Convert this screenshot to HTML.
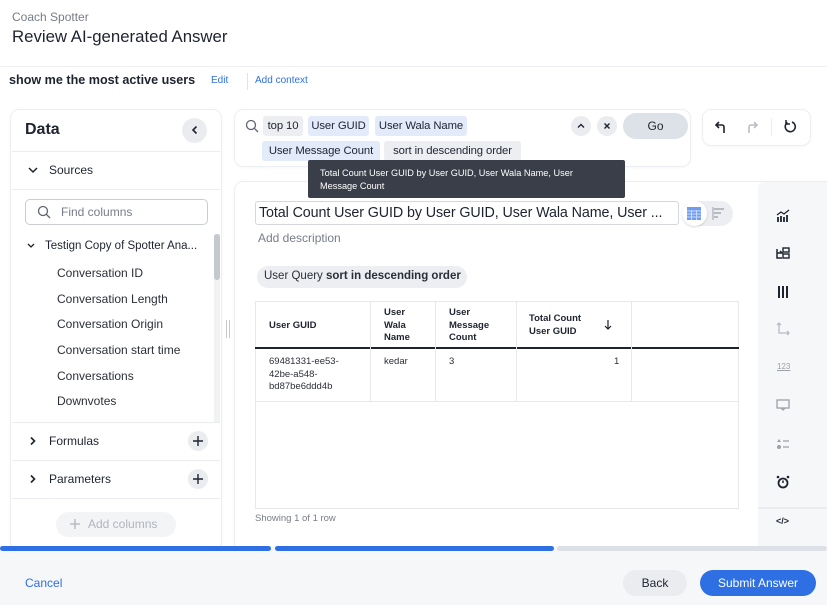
<!DOCTYPE html>
<html><head><style>
*{box-sizing:border-box;margin:0;padding:0}
body{width:827px;height:605px;overflow:hidden;background:#fff;font-family:"Liberation Sans",sans-serif;color:#1d232f;position:relative}
.a{position:absolute}
.t{position:absolute;white-space:nowrap}
.panel{position:absolute;background:#fff;border-radius:8px;box-shadow:0 0 0 1px #eceef2,0 1px 3px rgba(0,0,0,.06)}
.hr{position:absolute;height:1px;background:#eaecf0}
.chip{position:absolute;height:20px;line-height:20px;font-size:11.3px;border-radius:3px;text-align:center;white-space:nowrap;overflow:hidden;letter-spacing:-0.1px}
.blue{background:#e3ebfb}.gray{background:#eceef2}
.circ{position:absolute;border-radius:50%;background:#eaecf0}
.item{position:absolute;left:57px;font-size:12px;color:#2b2f38}
.icon{position:absolute;left:775px}
</style></head><body>
<div class="t" style="left:12px;top:10px;font-size:12px;color:#777d88">Coach Spotter</div>
<div class="t" style="left:12px;top:27px;font-size:16.8px;color:#1d232f">Review AI-generated Answer</div>
<div class="hr" style="left:0;top:66px;width:827px;background:#eef0f3"></div>
<div class="t" style="left:9px;top:73px;font-size:12.6px;font-weight:bold">show me the most active users</div>
<div class="t" style="left:211px;top:75px;font-size:10px;color:#2f6fe4">Edit</div>
<div class="a" style="left:247px;top:73px;width:1px;height:17px;background:#e1e3e8"></div>
<div class="t" style="left:255px;top:75px;font-size:10px;color:#2f6fe4">Add context</div>

<!-- left panel -->
<div class="panel" style="left:11px;top:110px;width:210px;height:440px"></div>
<div class="t" style="left:25px;top:121px;font-size:16px;font-weight:bold">Data</div>
<div class="circ" style="left:182px;top:118px;width:25px;height:25px"></div>
<svg class="a" style="left:189px;top:124px" width="12" height="12"><path d="M7.5 2.5 4 6l3.5 3.5" stroke="#1d232f" stroke-width="1.6" fill="none"/></svg>
<div class="hr" style="left:12px;top:151px;width:208px"></div>
<svg class="a" style="left:27px;top:165px" width="12" height="10"><path d="M2 3l4 4 4-4" stroke="#1d232f" stroke-width="1.5" fill="none"/></svg>
<div class="t" style="left:49px;top:163px;font-size:12px">Sources</div>
<div class="hr" style="left:12px;top:189px;width:208px"></div>
<div class="a" style="left:25px;top:199px;width:183px;height:26px;border:1px solid #c9ccd3;border-radius:5px"></div>
<svg class="a" style="left:37px;top:205px" width="14" height="14"><circle cx="6" cy="6" r="4.5" stroke="#5f6570" stroke-width="1.3" fill="none"/><path d="M9.3 9.3 13 13" stroke="#5f6570" stroke-width="1.3"/></svg>
<div class="t" style="left:61px;top:205px;font-size:12px;color:#777d88">Find columns</div>
<svg class="a" style="left:26px;top:242px" width="10" height="8"><path d="M2 2l3 3 3-3" stroke="#1d232f" stroke-width="1.3" fill="none"/></svg>
<div class="t" style="left:45px;top:240px;font-size:11.5px">Testign Copy of Spotter Ana...</div>
<div class="a" style="left:214px;top:234px;width:6px;height:188px;background:#f1f2f4"></div>
<div class="a" style="left:214px;top:234px;width:6px;height:46px;background:#c5c8ce;border-radius:3px"></div>
<div class="item" style="top:266px">Conversation ID</div>
<div class="item" style="top:292px">Conversation Length</div>
<div class="item" style="top:317px">Conversation Origin</div>
<div class="item" style="top:343px">Conversation start time</div>
<div class="item" style="top:369px">Conversations</div>
<div class="item" style="top:394px">Downvotes</div>
<div class="hr" style="left:12px;top:422px;width:208px"></div>
<svg class="a" style="left:28px;top:436px" width="10" height="10"><path d="M3 1.5l3.5 3.5L3 8.5" stroke="#1d232f" stroke-width="1.6" fill="none"/></svg>
<div class="t" style="left:49px;top:434px;font-size:12px">Formulas</div>
<div class="circ" style="left:188px;top:431px;width:20px;height:20px"></div>
<svg class="a" style="left:192px;top:435px" width="12" height="12"><path d="M6 1v10M1 6h10" stroke="#1d232f" stroke-width="1.4"/></svg>
<div class="hr" style="left:12px;top:460px;width:208px"></div>
<svg class="a" style="left:28px;top:474px" width="10" height="10"><path d="M3 1.5l3.5 3.5L3 8.5" stroke="#1d232f" stroke-width="1.6" fill="none"/></svg>
<div class="t" style="left:49px;top:472px;font-size:12px">Parameters</div>
<div class="circ" style="left:188px;top:469px;width:20px;height:20px"></div>
<svg class="a" style="left:192px;top:473px" width="12" height="12"><path d="M6 1v10M1 6h10" stroke="#1d232f" stroke-width="1.4"/></svg>
<div class="hr" style="left:12px;top:498px;width:208px"></div>
<div class="a" style="left:56px;top:512px;width:120px;height:25px;border-radius:13px;background:#f3f4f6"></div>
<svg class="a" style="left:69px;top:518px" width="12" height="12"><path d="M6 1v10M1 6h10" stroke="#b0b4bc" stroke-width="1.3"/></svg>
<div class="t" style="left:88px;top:517px;font-size:12px;color:#b0b4bc">Add columns</div>
<div class="a" style="left:226px;top:320px;width:1px;height:18px;background:#c5c8ce"></div>
<div class="a" style="left:229px;top:320px;width:1px;height:18px;background:#c5c8ce"></div>

<!-- search -->
<div class="panel" style="left:235px;top:110px;width:455px;height:56px"></div>
<svg class="a" style="left:245px;top:119px" width="14" height="14"><circle cx="6" cy="6" r="4.5" stroke="#5f6570" stroke-width="1.3" fill="none"/><path d="M9.3 9.3 13 13" stroke="#5f6570" stroke-width="1.3"/></svg>
<div class="chip gray" style="left:263px;top:116px;width:40px">top 10</div>
<div class="chip blue" style="left:308px;top:116px;width:61px">User GUID</div>
<div class="chip blue" style="left:375px;top:116px;width:92px">User Wala Name</div>
<div class="chip blue" style="left:262px;top:141px;width:118px">User Message Count</div>
<div class="chip gray" style="left:384px;top:141px;width:137px">sort in descending order</div>
<div class="circ" style="left:571px;top:116px;width:20px;height:20px"></div>
<svg class="a" style="left:576px;top:121px" width="10" height="10"><path d="M2 6.5 5 3.5l3 3" stroke="#1d232f" stroke-width="1.4" fill="none"/></svg>
<div class="circ" style="left:597px;top:116px;width:20px;height:20px"></div>
<svg class="a" style="left:602px;top:121px" width="10" height="10"><path d="M2.5 2.5l5 5M7.5 2.5l-5 5" stroke="#1d232f" stroke-width="1.4"/></svg>
<div class="a" style="left:623px;top:113px;width:65px;height:26px;border-radius:13px;background:#dde1e8;font-size:12px;text-align:center;line-height:26px">Go</div>

<div class="panel" style="left:703px;top:110px;width:107px;height:35px"></div>
<svg class="a" style="left:714px;top:119px" width="16" height="16"><path d="M5 3 2 6l3 3M2 6h6a2 2 0 0 1 2 2v6" stroke="#1d232f" stroke-width="1.6" fill="none"/></svg>
<svg class="a" style="left:743px;top:119px" width="16" height="16"><path d="M11 3l3 3-3 3M14 6H8a2 2 0 0 0-2 2v6" stroke="#b6bac2" stroke-width="1.5" fill="none"/></svg>
<div class="a" style="left:771px;top:118px;width:1px;height:18px;background:#eaecf0"></div>
<svg class="a" style="left:782px;top:118px" width="16" height="16"><path d="M5.5 4.5A5 5 0 1 0 10 4" stroke="#1d232f" stroke-width="1.6" fill="none"/><path d="M4 2v4h4" stroke="#1d232f" stroke-width="1.5" fill="none"/></svg>

<!-- main panel -->
<div class="panel" style="left:235px;top:182px;width:600px;height:370px"></div>
<div class="a" style="left:758px;top:182px;width:69px;height:364px;background:#f6f7f9;border-radius:6px 0 0 0"></div>
<div class="a" style="left:758px;top:507px;width:69px;height:2px;background:#eaecf0"></div>
<div class="a" style="left:255px;top:201px;width:424px;height:24px;border:1px solid #d4d7dd;border-radius:3px;overflow:hidden"></div>
<div class="t" style="left:259px;top:205px;font-size:14.3px;letter-spacing:-0.1px">Total Count User GUID by User GUID, User Wala Name, User ...</div>
<div class="a" style="left:682px;top:201px;width:51px;height:25px;border-radius:13px;background:#eceef2"></div>
<div class="circ" style="left:682px;top:201px;width:25px;height:25px;background:#fff;box-shadow:0 1px 2px rgba(0,0,0,.15)"></div>
<svg class="a" style="left:687px;top:207px" width="14" height="13"><rect x="0" y="0" width="14" height="13" fill="#6f9cf0"/><path d="M0 4h14M0 7h14M0 10h14M4.5 3v10M9.5 3v10" stroke="#c9dafb" stroke-width="1"/></svg>
<svg class="a" style="left:712px;top:207px" width="14" height="13"><path d="M1 0v13" stroke="#b6bac2" stroke-width="1.5"/><rect x="2" y="1" width="10" height="2" fill="#b6bac2"/><rect x="2" y="5" width="7" height="2" fill="#b6bac2"/><rect x="2" y="9" width="4" height="2" fill="#b6bac2"/></svg>
<div class="t" style="left:258px;top:231px;font-size:12px;color:#777d88">Add description</div>
<div class="a" style="left:257px;top:266px;width:210px;height:22px;border-radius:11px;background:#eceef2"></div>
<div class="t" style="left:264px;top:270px;font-size:11.5px;color:#2b2f38">User Query <b>sort in descending order</b></div>

<div class="a" style="left:255px;top:301px;width:484px;height:208px;border:1px solid #e6e8ec"></div>
<div class="a" style="left:255px;top:347px;width:484px;height:2px;background:#1d232f"></div>
<div class="a" style="left:255px;top:401px;width:484px;height:1px;background:#e6e8ec"></div>
<div class="a" style="left:370px;top:301px;width:1px;height:100px;background:#e6e8ec"></div>
<div class="a" style="left:435px;top:301px;width:1px;height:100px;background:#e6e8ec"></div>
<div class="a" style="left:516px;top:301px;width:1px;height:100px;background:#e6e8ec"></div>
<div class="a" style="left:631px;top:301px;width:1px;height:100px;background:#e6e8ec"></div>
<div class="t" style="left:269px;top:320px;font-size:9.5px;font-weight:bold">User GUID</div>
<div class="t" style="left:384px;top:307px;font-size:9.5px;font-weight:bold;line-height:12.7px">User<br>Wala<br>Name</div>
<div class="t" style="left:449px;top:307px;font-size:9.5px;font-weight:bold;line-height:12.7px">User<br>Message<br>Count</div>
<div class="t" style="left:529px;top:313px;font-size:9.5px;font-weight:bold;line-height:12.7px">Total Count<br>User GUID</div>
<svg class="a" style="left:603px;top:319px" width="10" height="12"><path d="M5 1v9M2 7l3 3 3-3" stroke="#1d232f" stroke-width="1.2" fill="none"/></svg>
<div class="t" style="left:269px;top:356px;font-size:9.5px;line-height:12.7px;color:#2b2f38">69481331-ee53-<br>42be-a548-<br>bd87be6ddd4b</div>
<div class="t" style="left:384px;top:356px;font-size:9.5px;color:#2b2f38">kedar</div>
<div class="t" style="left:449px;top:356px;font-size:9.5px;color:#2b2f38">3</div>
<div class="t" style="left:614px;top:356px;font-size:9.5px;color:#2b2f38">1</div>
<div class="t" style="left:255px;top:513px;font-size:9.5px;color:#777d88">Showing 1 of 1 row</div>

<!-- side icons -->
<svg class="icon" style="top:207px" width="16" height="16"><path d="M2 8l4-3 3 2 5-4" stroke="#1d232f" stroke-width="1.3" fill="none"/><path d="M3 10v5M6 9v6M9 10v5M12 8v7" stroke="#1d232f" stroke-width="1.8"/></svg>
<svg class="icon" style="top:245px" width="16" height="16"><path d="M2 4v9h5M2 8h5l-2-2" stroke="#1d232f" stroke-width="1.5" fill="none"/><rect x="8" y="3" width="6" height="4" stroke="#1d232f" stroke-width="1.4" fill="none"/><rect x="8" y="9" width="6" height="4" stroke="#1d232f" stroke-width="1.4" fill="none"/></svg>
<svg class="icon" style="top:284px" width="16" height="16"><path d="M4 2v12M8 2v12M12 2v12" stroke="#1d232f" stroke-width="2"/></svg>
<svg class="icon" style="top:321px" width="16" height="16"><path d="M4 2v10h10M2 4l2-2 2 2M12 10l2 2-2 2" stroke="#b6bac2" stroke-width="1.3" fill="none"/></svg>
<div class="t" style="left:777px;top:362px;font-size:8px;color:#9ca0a8;text-decoration:underline">123</div>
<svg class="icon" style="top:397px" width="16" height="16"><rect x="2" y="3" width="12" height="8" stroke="#9ca0a8" stroke-width="1.3" fill="none"/><path d="M6 11l2 2 2-2" stroke="#9ca0a8" stroke-width="1.3" fill="none"/></svg>
<svg class="icon" style="top:436px" width="16" height="16"><path d="M4 3l2 3H2z" fill="#9ca0a8"/><circle cx="4" cy="11" r="2" fill="#9ca0a8"/><path d="M8 5h6M8 11h6" stroke="#9ca0a8" stroke-width="1.3"/></svg>
<svg class="icon" style="top:474px" width="16" height="16"><circle cx="8" cy="9" r="4.5" stroke="#1d232f" stroke-width="1.8" fill="none"/><path d="M8 9V6.5" stroke="#1d232f" stroke-width="1.5"/><circle cx="3" cy="3" r="1.3" fill="#1d232f"/><circle cx="13" cy="3" r="1.3" fill="#1d232f"/></svg>
<div class="t" style="left:776px;top:516px;font-size:9px;font-weight:bold">&lt;/&gt;</div>

<!-- tooltip -->
<div class="a" style="left:308px;top:160px;width:317px;height:38px;background:#3a3e48;border-radius:2px"></div>
<div class="t" style="left:320px;top:167px;font-size:9.2px;color:#fff;line-height:12.7px">Total Count User GUID by User GUID, User Wala Name, User<br>Message Count</div>

<!-- progress -->
<div class="a" style="left:0;top:546px;width:827px;height:59px;background:#f6f7f9"></div>
<div class="a" style="left:0;top:546px;width:271px;height:5px;background:#2e6fe4;border-radius:3px"></div>
<div class="a" style="left:275px;top:546px;width:279px;height:5px;background:#2e6fe4;border-radius:3px"></div>
<div class="a" style="left:557px;top:546px;width:270px;height:5px;background:#dde0e6;border-radius:3px"></div>
<div class="t" style="left:25px;top:576px;font-size:12px;color:#2e6fe4">Cancel</div>
<div class="a" style="left:623px;top:570px;width:64px;height:26px;border-radius:13px;background:#eaecf0;font-size:12px;text-align:center;line-height:26px">Back</div>
<div class="a" style="left:700px;top:570px;width:116px;height:26px;border-radius:13px;background:#2e6fe4;color:#fff;font-size:12px;text-align:center;line-height:26px">Submit Answer</div>
</body></html>
